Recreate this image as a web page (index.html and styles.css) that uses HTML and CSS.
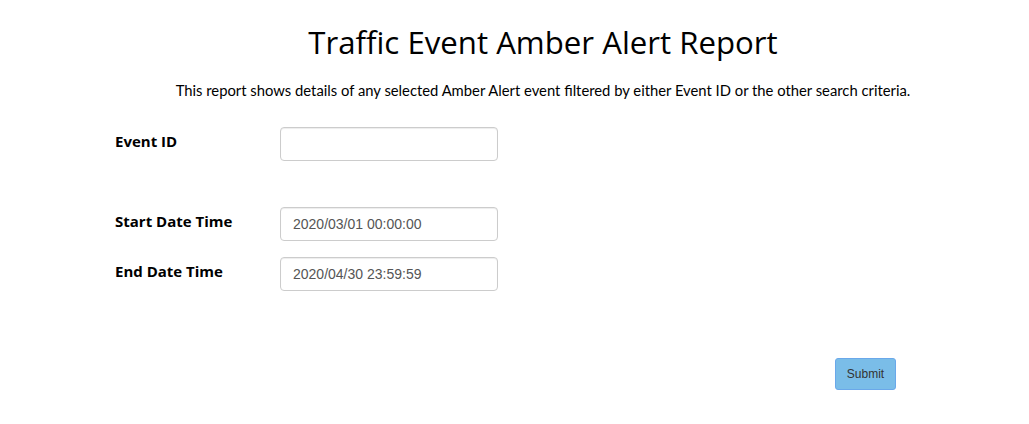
FILE: index.html
```html
<!DOCTYPE html>
<html lang="en">
<head>
    <meta charset="UTF-8">
    <meta name="viewport" content="width=device-width, initial-scale=1.0">
    <title>Traffic Event Amber Alert Report</title>
    <link rel="stylesheet" href="styles.css">
</head>
<body>

    <div class="report">
        <h1>Traffic Event Amber Alert Report</h1>
        <p class="intro">This report shows details of any selected Amber Alert event filtered by either Event ID or the other search criteria.</p>

        <form class="search-form">
            <div class="form-row">
                <label for="eventId">Event ID</label>
                <input type="text" id="eventId" name="eventId">
            </div>

            <div class="form-row gap-above">
                <label for="startDate">Start Date Time</label>
                <input type="text" id="startDate" name="startDate" value="2020/03/01 00:00:00">
            </div>
            <div class="form-row">
                <label for="endDate">End Date Time</label>
                <input type="text" id="endDate" name="endDate" value="2020/04/30 23:59:59">
            </div>

            <div class="actions">
                <button type="submit">Submit</button>
            </div>
        </form>
    </div>

</body>
</html>
```

FILE: styles.css
```css
body {
    font-family: Lato, "Open Sans", sans-serif;
    margin: 0;
    background-color: #fff;
    color: #000;
}
.report {
    padding: 21px 0 0 115px;
    width: 856px;
}
h1 {
    font-family: "Open Sans", sans-serif;
    font-weight: normal;
    font-size: 31.2px;
    line-height: 42px;
    text-align: center;
    margin: 0 0 18px 0;
}
.intro {
    font-size: 14.8px;
    text-align: center;
    margin: 0 0 28px 0;
}
.form-row {
    display: flex;
    align-items: flex-start;
    margin-bottom: 16px;
}
.form-row.gap-above {
    margin-top: 46px;
}
.form-row label {
    font-family: "Open Sans", sans-serif;
    font-weight: bold;
    font-size: 15px;
    width: 165px;
    padding-top: 4px;
}
.form-row input {
    width: 218px;
    height: 34px;
    box-sizing: border-box;
    border: 1px solid #ccc;
    border-radius: 4px;
    padding: 6px 12px;
    font-family: "Liberation Sans", Arial, sans-serif;
    font-size: 14px;
    color: #555;
    box-shadow: inset 0 1px 1px rgba(0, 0, 0, 0.075);
}
.actions {
    display: flex;
    justify-content: flex-end;
    padding-right: 75px;
    margin-top: 67px;
}
.actions button {
    background-color: #7abde8;
    border: 1px solid #6aa8ea;
    border-radius: 3px;
    color: #333;
    font-family: "Liberation Sans", Arial, sans-serif;
    font-size: 12px;
    width: 61px;
    height: 32px;
}
```
